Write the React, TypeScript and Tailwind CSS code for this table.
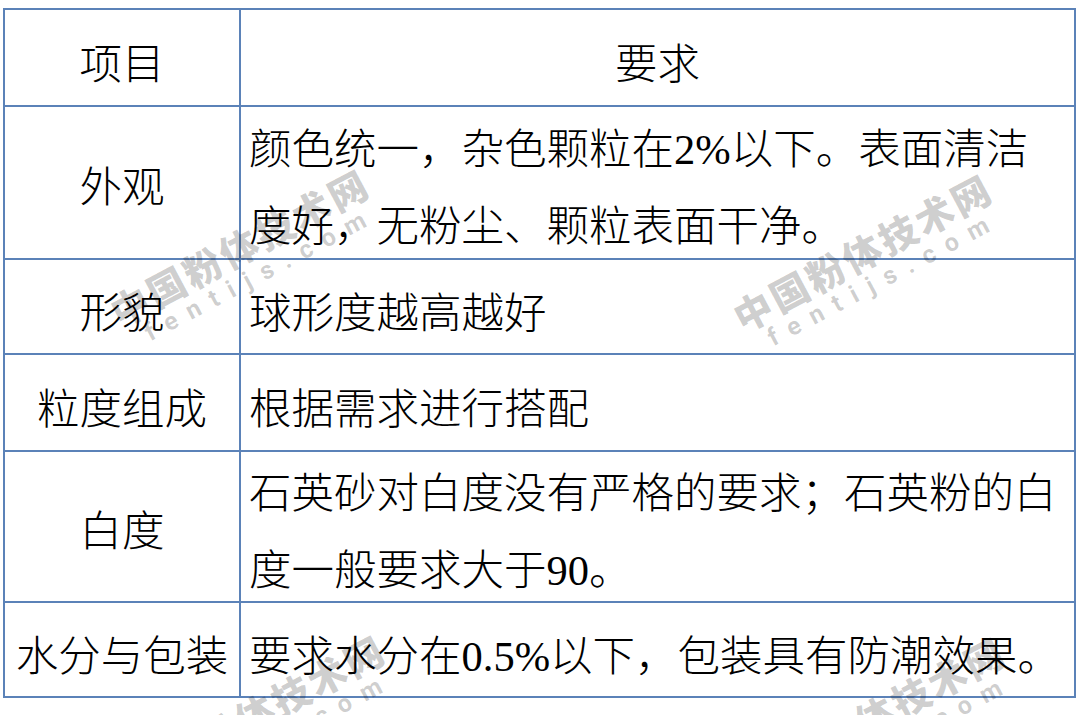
import React from "react";

const Num = ({ children }: { children: React.ReactNode }) => (
  <span className="font-['Liberation_Serif','Times_New_Roman',serif] font-normal">{children}</span>
);

type Row = { h: string; label: string; lines: React.ReactNode[]; header?: boolean };

const rows: Row[] = [
  { h: "h-[95px]", label: "项目", lines: ["要求"], header: true },
  {
    h: "h-[153px]",
    label: "外观",
    lines: [
      <>
        颜色统一，杂色颗粒在<Num>2%</Num>以下。表面清洁
      </>,
      "度好，无粉尘、颗粒表面干净。",
    ],
  },
  { h: "h-[95px]", label: "形貌", lines: ["球形度越高越好"] },
  { h: "h-[97px]", label: "粒度组成", lines: ["根据需求进行搭配"] },
  {
    h: "h-[151px]",
    label: "白度",
    lines: [
      "石英砂对白度没有严格的要求；石英粉的白",
      <>
        度一般要求大于<Num>90</Num>。
      </>,
    ],
  },
  {
    h: "h-[95px]",
    label: "水分与包装",
    lines: [
      <>
        要求水分在<Num>0.5%</Num>以下，包装具有防潮效果。
      </>,
    ],
  },
];

function Watermark({ pos }: { pos: string }) {
  return (
    <div
      className={`absolute pointer-events-none -translate-x-1/2 -translate-y-1/2 -rotate-[28deg] flex flex-col items-center text-black/20 whitespace-nowrap ${pos}`}
    >
      <div className="font-['Noto_Sans_CJK_SC',sans-serif] text-[38px] font-black leading-[40px] tracking-[3px]">
        中国粉体技术网
      </div>
      <div className="font-['Roboto','Noto_Sans',sans-serif] text-[25px] font-bold leading-[28px] tracking-[12px] pl-[12px]">
        fentijs.com
      </div>
    </div>
  );
}

export default function App() {
  return (
    <div className="relative w-[1080px] h-[715px] bg-white overflow-hidden text-black font-['Liberation_Serif','Noto_Sans_CJK_SC',serif] font-light">
      <div className="pt-[8px] pl-[3px]">
        <div className="w-[1073px] border-2 border-[#5b82b8] flex flex-col">
          {rows.map((r, i) => {
            const pad = r.lines.length > 1 ? "pt-[10px]" : "pt-[13px]";
            return (
              <div
                key={i}
                className={`flex ${r.h} ${i > 0 ? "border-t-2 border-[#5b82b8]" : ""}`}
              >
                <div
                  className={`w-[234px] shrink-0 flex items-center justify-center text-[42.5px] leading-[77px] whitespace-nowrap ${pad}`}
                >
                  {r.label}
                </div>
                <div
                  className={`flex-1 border-l-2 border-[#5b82b8] flex flex-col justify-center text-[42.5px] leading-[77px] whitespace-nowrap ${pad} ${
                    r.header ? "items-center" : "items-start pl-[8px]"
                  }`}
                >
                  {r.lines.map((l, j) => (
                    <div key={j}>{l}</div>
                  ))}
                </div>
              </div>
            );
          })}
        </div>
      </div>
      <Watermark pos="left-[869px] top-[264px]" />
      <Watermark pos="left-[246px] top-[259px]" />
      <Watermark pos="left-[882px] top-[727px]" />
      <Watermark pos="left-[262px] top-[725px]" />
    </div>
  );
}
